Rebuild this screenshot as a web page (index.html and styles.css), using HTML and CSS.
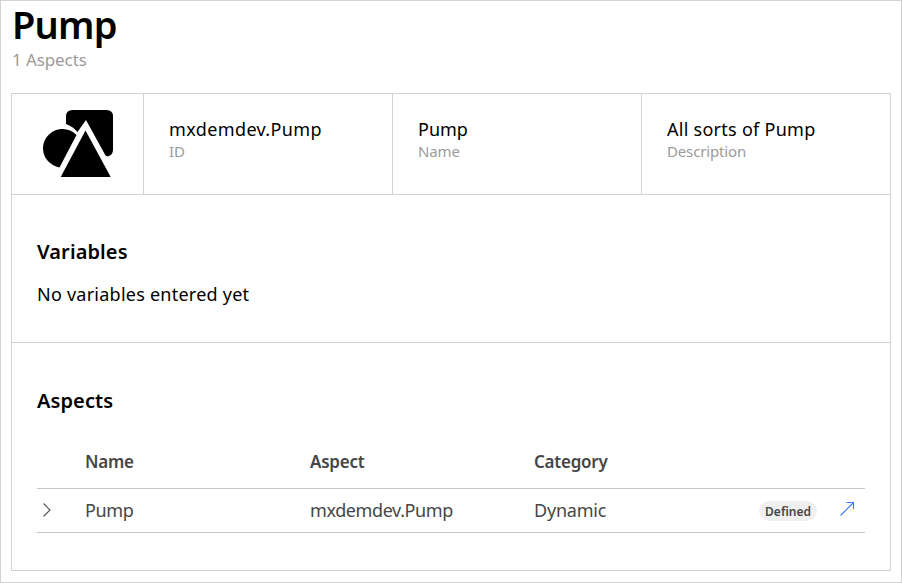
FILE: index.html
```html
<!DOCTYPE html>
<html lang="en">
<head>
<meta charset="utf-8">
<title>Pump</title>
<link rel="stylesheet" href="styles.css">
</head>
<body>
<main class="page">
  <header class="header">
    <h1 class="title">Pump</h1>
    <p class="subtitle">1 Aspects</p>
  </header>
  <div class="panel">
    <section class="summary">
      <div class="cell cell-icon">
        <svg class="type-icon" width="72" height="70" viewBox="0 0 72 70" aria-hidden="true">
          <path d="M24 15V7.500Q24 1 30.500 1H64.500Q71 1 71 7.500V41Q71 46 65.500 47.500L63.500 46.500L44 11L35.500 23Q31 17.500 24 15Z"/>
          <path d="M34.500 26L17.500 58.500C8 56.500 1 49 1 39.500C1 28.500 10 20 20.500 20C26 20 31 22 34.500 26Z"/>
          <path d="M43.500 21.500L68.700 68H18.700Z"/>
        </svg>
      </div>
      <div class="cell"><p class="value id-value">mxdemdev.Pump</p><p class="label">ID</p></div>
      <div class="cell"><p class="value">Pump</p><p class="label">Name</p></div>
      <div class="cell"><p class="value desc-value">All sorts of Pump</p><p class="label">Description</p></div>
    </section>
    <section class="variables">
      <h2 class="heading">Variables</h2>
      <p class="empty">No variables entered yet</p>
    </section>
    <section class="aspects">
      <h2 class="heading">Aspects</h2>
      <div class="table">
        <div class="row head"><span></span><span>Name</span><span>Aspect</span><span>Category</span></div>
        <div class="row item">
          <svg class="chevron" width="10" height="16" viewBox="0 0 10 16" aria-hidden="true"><path d="M1.500 1.500L8 8L1.500 14.500"/></svg>
          <span>Pump</span><span>mxdemdev.Pump</span><span class="category">Dynamic</span>
          <span class="badge">Defined</span>
          <svg class="open" width="16" height="16" viewBox="0 0 16 16" aria-hidden="true"><path d="M1.500 14.500L14 2M7.500 1.500H14.500V8"/></svg>
        </div>
      </div>
    </section>
  </div>
</main>
</body>
</html>
```
FILE: styles.css
```css
* { box-sizing: border-box; }
body { margin: 0; background: #fff; color: #000; font-family: "Noto Sans", sans-serif; }
h1, h2, p { margin: 0; }
.page { height: 583px; padding: 0 10px; border: 1px solid #d2d2d2; }
.header { height: 92px; padding-left: 1px; }
.title { font-size: 38px; font-weight: 600; line-height: 46px; letter-spacing: -0.8px; }
.subtitle { margin-top: 2px; font-size: 17px; line-height: 22px; color: #9b9b9b; letter-spacing: -0.1px; }
.panel { height: 478px; border: 1px solid #d2d2d2; }
.summary { display: grid; grid-template-columns: 132px 249px 249px 248px; height: 101px; border-bottom: 1px solid #d2d2d2; }
.cell { padding: 23px 0 0 25px; border-right: 1px solid #d2d2d2; white-space: nowrap; }
.cell:last-child { border-right: 0; }
.cell-icon { padding: 15px 0 0 30px; }
.type-icon { display: block; }
.value { font-size: 18px; line-height: 24px; }
.id-value { letter-spacing: 0.38px; }
.desc-value { letter-spacing: 0.27px; }
.label { font-size: 15px; line-height: 20px; color: #9b9b9b; letter-spacing: -0.15px; }
.variables { height: 148px; padding: 43px 25px 0; border-bottom: 1px solid #d2d2d2; }
.heading { font-size: 20px; font-weight: 600; line-height: 28px; letter-spacing: 0.1px; }
.empty { margin-top: 15px; font-size: 18px; line-height: 26px; letter-spacing: 0.24px; }
.aspects { padding: 44px 25px 0; }
.table { margin-top: 17px; color: #464646; }
.row { display: grid; grid-template-columns: 48px 225px 224px 225px 75px 31px; align-items: center; border-bottom: 1px solid #c3c3c3; }
.head { height: 57px; padding-top: 3px; font-size: 17px; font-weight: 600; line-height: 53px; letter-spacing: -0.25px; }
.item { height: 44px; padding-bottom: 2px; font-size: 18px; letter-spacing: -0.4px; }
.category { letter-spacing: -0.2px; }
.chevron { margin-left: 5px; fill: none; stroke: #555; stroke-width: 1.1; }
.badge { width: 58px; height: 20px; margin-top: 2px; border-radius: 10px; background: #f0f0f0; font-size: 12px; font-weight: 600; line-height: 21px; letter-spacing: 0; text-align: center; }
.open { margin: -2px 0 0 5px; fill: none; stroke: #3b78ff; stroke-width: 1.1; }
```
